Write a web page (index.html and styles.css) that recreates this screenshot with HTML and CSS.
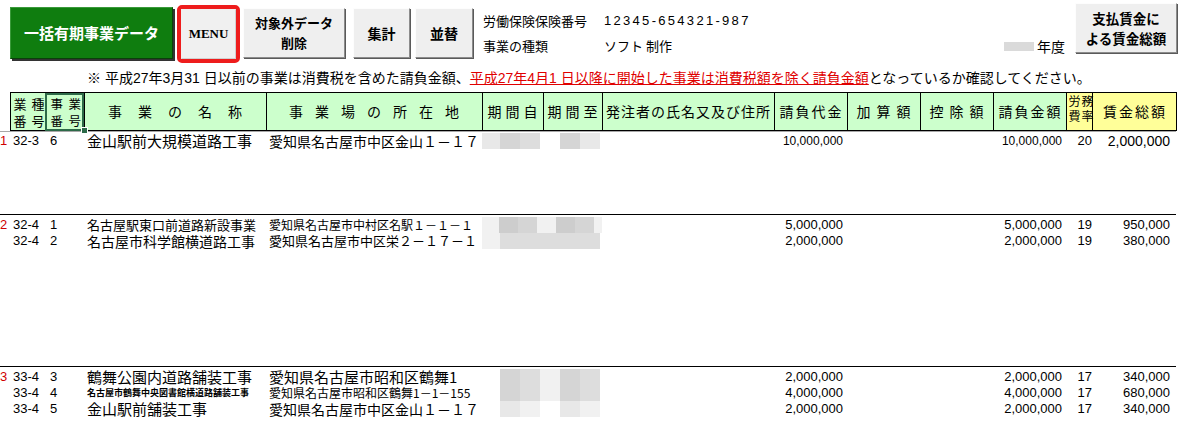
FILE: index.html
```html
<!DOCTYPE html>
<html lang="ja">
<head>
  <meta charset="UTF-8">
  <title>一括有期事業データ</title>
  <link rel="stylesheet" href="styles.css">
</head>
<body>
  <div class="toolbar">
    <button class="btn btn-green">一括有期事業データ</button>
    <div class="menu-frame"><button class="btn btn-menu">MENU</button></div>
    <button class="btn btn-wide">対象外データ<br>削除</button>
    <button class="btn btn-sum">集計</button>
    <button class="btn btn-sort">並替</button>
    <dl class="info">
      <dt>労働保険保険番号</dt><dd class="insurance-no">12345-654321-987</dd>
      <dt>事業の種類</dt><dd>ソフト 制作</dd>
    </dl>
    <div class="year"><span class="year-box"></span>年度</div>
    <button class="btn btn-total">支払賃金に<br>よる賃金総額</button>
  </div>

  <p class="note">※ 平成27年3月31 日以前の事業は消費税を含めた請負金額、<span class="warn">平成27年4月1 日以降に開始した事業は消費税額を除く請負金額</span>となっているか確認してください。</p>

  <table class="sheet">
    <colgroup>
      <col class="c-mark">
      <col class="c-code">
      <col class="c-no">
      <col class="c-name">
      <col class="c-addr">
      <col class="c-from">
      <col class="c-to">
      <col class="c-client">
      <col class="c-amount">
      <col class="c-amount">
      <col class="c-amount">
      <col class="c-amount">
      <col class="c-rate">
      <col class="c-wage">
    </colgroup>
    <thead>
      <tr>
        <th class="mark"></th>
        <th class="pair">業種<br>番号</th>
        <th class="pair current">事業<br>番号</th>
        <th class="spread-xl">事業の名称</th>
        <th class="spread-l">事業場の所在地</th>
        <th class="spread-p">期間自</th>
        <th class="spread-p">期間至</th>
        <th class="spread-xs">発注者の氏名又及び住所</th>
        <th class="spread-s">請負代金</th>
        <th class="spread-m">加算額</th>
        <th class="spread-m">控除額</th>
        <th class="spread-s">請負金額</th>
        <th class="pair rate yellow">労務<br>費率</th>
        <th class="spread-s yellow">賃金総額</th>
      </tr>
    </thead>

    <!-- 32-3 -->
    <tbody class="group">
      <tr class="first">
        <td class="mark">1</td>
        <td class="code">32-3</td>
        <td class="no">6</td>
        <td class="name t15">金山駅前大規模道路工事</td>
        <td class="addr t14">愛知県名古屋市中区金山１－１７</td>
        <td colspan="2"><div class="mosaic"><span class="s2"></span><span class="s4"></span><span class="s3"></span><span></span><span class="s4"></span><span class="s2"></span></div></td>
        <td></td>
        <td class="num n12">10,000,000</td>
        <td></td>
        <td></td>
        <td class="num n12">10,000,000</td>
        <td class="num rate-val">20</td>
        <td class="num wage n14">2,000,000</td>
      </tr>
      <tr class="gap gap-1"><td colspan="14"></td></tr>
    </tbody>

    <!-- 32-4 -->
    <tbody class="group">
      <tr class="first">
        <td class="mark">2</td>
        <td class="code">32-4</td>
        <td class="no">1</td>
        <td class="name t13">名古屋駅東口前道路新設事業</td>
        <td class="addr t12">愛知県名古屋市中村区名駅１－１－１</td>
        <td colspan="2"><div class="mosaic"><span class="s1"></span><span class="s5"></span><span class="s4"></span><span class="s1"></span><span class="s5"></span><span class="s4"></span><span class="s1 tail"></span></div></td>
        <td></td>
        <td class="num">5,000,000</td>
        <td></td>
        <td></td>
        <td class="num">5,000,000</td>
        <td class="num rate-val">19</td>
        <td class="num wage">950,000</td>
      </tr>
      <tr>
        <td class="mark"></td>
        <td class="code">32-4</td>
        <td class="no">2</td>
        <td class="name t14">名古屋市科学館横道路工事</td>
        <td class="addr t13">愛知県名古屋市中区栄２－１７－１</td>
        <td colspan="2"><div class="mosaic"><span class="s1"></span><span class="s3"></span><span class="s3"></span><span class="s3"></span><span class="s3"></span><span class="s3"></span></div></td>
        <td></td>
        <td class="num">2,000,000</td>
        <td></td>
        <td></td>
        <td class="num">2,000,000</td>
        <td class="num rate-val">19</td>
        <td class="num wage">380,000</td>
      </tr>
      <tr class="gap gap-2"><td colspan="14"></td></tr>
    </tbody>

    <!-- 33-4 -->
    <tbody class="group">
      <tr class="first">
        <td class="mark">3</td>
        <td class="code">33-4</td>
        <td class="no">3</td>
        <td class="name t15">鶴舞公園内道路舗装工事</td>
        <td class="addr t15">愛知県名古屋市昭和区鶴舞1</td>
        <td colspan="2"><div class="mosaic"><span></span><span class="s4"></span><span class="s3"></span><span class="s1"></span><span class="s4"></span><span class="s3"></span></div></td>
        <td></td>
        <td class="num">2,000,000</td>
        <td></td>
        <td></td>
        <td class="num">2,000,000</td>
        <td class="num rate-val">17</td>
        <td class="num wage">340,000</td>
      </tr>
      <tr>
        <td class="mark"></td>
        <td class="code">33-4</td>
        <td class="no">4</td>
        <td class="name t9">名古屋市鶴舞中央図書館横道路舗装工事</td>
        <td class="addr t12">愛知県名古屋市昭和区鶴舞1－1－155</td>
        <td colspan="2"><div class="mosaic"><span></span><span class="s4"></span><span class="s3"></span><span class="s1"></span><span class="s4"></span><span class="s3"></span></div></td>
        <td></td>
        <td class="num">4,000,000</td>
        <td></td>
        <td></td>
        <td class="num">4,000,000</td>
        <td class="num rate-val">17</td>
        <td class="num wage">680,000</td>
      </tr>
      <tr>
        <td class="mark"></td>
        <td class="code">33-4</td>
        <td class="no">5</td>
        <td class="name t15">金山駅前舗装工事</td>
        <td class="addr t14">愛知県名古屋市中区金山１－１７</td>
        <td colspan="2"><div class="mosaic"><span></span><span class="s2"></span><span class="s1"></span><span></span><span class="s2"></span><span class="s1"></span></div></td>
        <td></td>
        <td class="num">2,000,000</td>
        <td></td>
        <td></td>
        <td class="num">2,000,000</td>
        <td class="num rate-val">17</td>
        <td class="num wage">340,000</td>
      </tr>
    </tbody>
  </table>
</body>
</html>
```

FILE: styles.css
```css
/* 一括有期事業 一覧シート */
body {
  margin: 0;
  font-family: "Liberation Sans", "Noto Sans CJK JP", sans-serif;
  font-size: 13px;
  color: #000;
  background: #fff;
  overflow: hidden;
}

/* 上部ボタン列 */
.toolbar {
  display: flex;
  align-items: flex-start;
  height: 70px;
  padding-right: 5px;
}

.btn {
  box-sizing: border-box;
  margin: 8px 0 0;
  padding: 0;
  height: 50px;
  font-family: "Noto Sans CJK JP", sans-serif;
  font-size: 14px;
  font-weight: bold;
  line-height: 20px;
  color: #000;
  background: #efefef;
  border: 1px solid;
  border-color: #fdfdfd #8c8c8c #8c8c8c #fdfdfd;
  box-shadow: 1px 1px 0 #5a5a5a;
}

.btn-green {
  margin: 7px 0 0 10px;
  width: 163px;
  height: 52px;
  font-size: 15px;
  color: #fff;
  background: #0f7d0f;
  border-color: #3a9a3a #0a400a #0a400a #3a9a3a;
  box-shadow: 2px 2px 0 #333;
}

.menu-frame {
  box-sizing: border-box;
  display: flex;
  margin: 5px 0 0 4px;
  width: 63px;
  height: 58px;
  border: 4px solid #ee1c1c;
  border-radius: 5px;
}

.btn-menu {
  flex: 1;
  margin: 0;
  height: auto;
  font-family: "Liberation Serif", serif;
  font-size: 13px;
  background: #f0f0f0;
  border-color: #f0f0f0 #d0d0d0 #d0d0d0 #f0f0f0;
  box-shadow: none;
}

.btn-wide {
  margin-left: 3px;
  width: 102px;
  font-size: 13px;
}

.btn-sum {
  margin-left: 8px;
  width: 57px;
}

.btn-sort {
  margin-left: 5px;
  width: 58px;
}

.btn-total {
  margin: 3px 0 0 10px;
  width: 102px;
  font-size: 13.5px;
}

.info {
  display: grid;
  grid-template-columns: 121px auto;
  margin: 8px 0 0 10px;
  font-family: "Noto Sans CJK JP", sans-serif;
  font-size: 13px;
  line-height: 25px;
}

.info dt,
.info dd {
  margin: 0;
}

.insurance-no {
  font-family: "Liberation Sans", sans-serif;
  letter-spacing: 2.3px;
}

.year {
  display: flex;
  align-items: center;
  margin: 38px 0 0 auto;
  font-family: "Noto Sans CJK JP", sans-serif;
  font-size: 14px;
  line-height: 16px;
}

.year-box {
  width: 30px;
  height: 9px;
  margin-right: 3px;
  background: #dadada;
}

/* 注意書き */
.note {
  margin: 0 0 6px;
  padding-left: 87px;
  font-size: 14px;
  line-height: 16px;
  white-space: nowrap;
}

.warn {
  color: #e00000;
  text-decoration: underline;
}

/* 一覧表 */
.sheet {
  border-collapse: collapse;
  table-layout: fixed;
  width: 1176px;
}

.c-mark { width: 10px; }
.c-code { width: 35px; }
.c-no { width: 39px; }
.c-name { width: 182px; }
.c-addr { width: 216px; }
.c-from { width: 61px; }
.c-to { width: 59px; }
.c-client { width: 172px; }
.c-amount { width: 73px; }
.c-rate { width: 26px; }
.c-wage { width: 84px; }

.sheet th {
  height: 37px;
  padding: 0;
  border: 1px solid #000;
  background: #ccffcc;
  font-family: "Noto Sans CJK JP", sans-serif;
  font-size: 14px;
  font-weight: normal;
  line-height: 17px;
  white-space: nowrap;
}

.sheet th.mark {
  border: none;
  background: none;
}

.sheet th.yellow {
  background: #ffff99;
}

/* 二段組みの見出し */
.sheet th.pair {
  padding-left: 3px;
  text-align: left;
  font-size: 13px;
  letter-spacing: 5px;
}

.sheet th.pair.current {
  padding-left: 5px;
  font-size: 12.5px;
  letter-spacing: 5.5px;
}

.sheet th.pair.rate {
  padding-left: 2px;
  vertical-align: top;
  font-size: 12px;
  line-height: 15px;
  letter-spacing: 1px;
}

/* 選択中のセル */
.current {
  position: relative;
  outline: 2px solid #2d6a48;
  outline-offset: -2px;
}

.current::after {
  content: "";
  position: absolute;
  right: -4px;
  bottom: -4px;
  width: 5px;
  height: 5px;
  background: #2d6a48;
  border: 1px solid #fff;
}

.spread-xl { letter-spacing: 16px; text-indent: 16px; }
.spread-l { letter-spacing: 12px; text-indent: 12px; }
.spread-m { letter-spacing: 6px; text-indent: 6px; }
.spread-p { letter-spacing: 4px; text-indent: 4px; }
.spread-s { letter-spacing: 2px; text-indent: 2px; }
.spread-xs { letter-spacing: 1px; text-indent: 1px; }

.sheet td {
  height: 16px;
  padding: 0;
  line-height: 16px;
  white-space: nowrap;
  vertical-align: top;
}

.sheet tbody:first-of-type .first td {
  box-shadow: inset 0 1px #a8a8a8;
}

.group + .group .first td {
  border-top: 1px solid #000;
}

.first td {
  padding-top: 2px;
}

.sheet td.mark {
  color: #d00000;
}

.code {
  padding-left: 3px !important;
}

.no {
  padding-left: 5px !important;
}

.name,
.addr {
  padding-left: 3px !important;
  font-family: "Noto Sans CJK JP", sans-serif;
}

.t9 { font-size: 9px; font-weight: bold; }
.t12 { font-size: 12px; }
.t13 { font-size: 13px; }
.t14 { font-size: 14px; }
.t15 { font-size: 15px; }

.num {
  text-align: right;
  padding-right: 4px !important;
}

.n12 { font-size: 12px; }
.n14 { font-size: 14px; }

.rate-val {
  padding-right: 0 !important;
}

.num.wage {
  padding-right: 6px !important;
}

/* ぼかし済みの期間 */
.mosaic {
  display: flex;
  height: 16px;
}

.mosaic span {
  width: 20px;
}

.mosaic span:first-child {
  width: 18px;
}

.mosaic .tail { width: 8px; }
.s1 { background: #f1f1f1; }
.s2 { background: #e8e8e8; }
.s3 { background: #dddddd; }
.s4 { background: #d5d5d5; }
.s5 { background: #cdcdcd; }

.gap-1 td { height: 65px; }
.gap-2 td { height: 117px; }
```
